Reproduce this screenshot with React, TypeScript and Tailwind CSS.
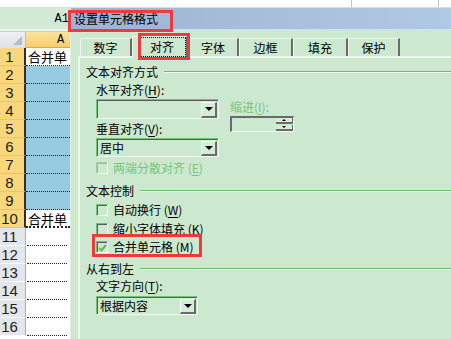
import React from "react";

function U({ c }: { c: string }) {
  return (
    <span>
      (<span className="underline underline-offset-2">{c}</span>)
    </span>
  );
}

function DropBtn({ h = "h-[16px]" }: { h?: string }) {
  return (
    <div
      className={`w-[16px] ${h} bg-[#d4edd7] border-t border-l border-t-white border-l-white border-b-2 border-r-2 border-b-[#6b6b6b] border-r-[#6b6b6b] flex items-center justify-center`}
    >
      <div className="w-0 h-0 border-l-[4px] border-r-[4px] border-t-[4px] border-l-transparent border-r-transparent border-t-black" />
    </div>
  );
}

function Dropdown({ w, h, text, bh }: { w: string; h: string; text?: string; bh?: string }) {
  return (
    <div
      className={`${w} ${h} flex border-t border-l border-b border-r border-t-[#74c07a] border-l-[#74c07a] border-b-[#f3faf3] border-r-[#f3faf3]`}
    >
      <div className="flex-1 flex items-center justify-between border-t border-l border-t-[#5c5c5c] border-l-[#5c5c5c] pl-[2px] pr-[1px]">
        <span className="text-[12px] leading-none">{text}</span>
        <DropBtn h={bh} />
      </div>
    </div>
  );
}

function CheckBox({ checked, disabled }: { checked?: boolean; disabled?: boolean }) {
  return (
    <div
      className={`w-[12px] h-[12px] flex border-t border-l border-b border-r ${
        disabled ? "border-t-[#9fcea4] border-l-[#9fcea4]" : "border-t-[#74c07a] border-l-[#74c07a]"
      } border-b-[#f3faf3] border-r-[#f3faf3]`}
    >
      <div
        className={`flex-1 border-t border-l ${
          disabled ? "border-t-[#a3b5a4] border-l-[#a3b5a4]" : "border-t-[#5c5c5c] border-l-[#5c5c5c]"
        } flex items-center justify-center`}
      >
        {checked && (
          <svg width="9" height="8" viewBox="0 0 9 8">
            <polyline points="1,4 3.5,6.5 8,1" fill="none" stroke="#5fbd66" strokeWidth="2" />
          </svg>
        )}
      </div>
    </div>
  );
}

function CheckItem({
  label,
  k,
  checked,
  disabled,
  mt,
}: {
  label: string;
  k: string;
  checked?: boolean;
  disabled?: boolean;
  mt: string;
}) {
  return (
    <div className={`flex items-center h-[12px] ${mt}`}>
      <CheckBox checked={checked} disabled={disabled} />
      <span className={`ml-[5px] whitespace-nowrap ${disabled ? "text-[#78c47e]" : ""}`}>
        {label} <U c={k} />
      </span>
    </div>
  );
}

function Heading({ text, mt }: { text: string; mt: string }) {
  return (
    <div className={`flex items-center h-[14px] ${mt}`}>
      <span className="whitespace-nowrap">{text}</span>
      <div className="flex-1 ml-[6px] h-[2px] border-t border-b border-t-[#6cba73] border-b-[#eef8ee]" />
    </div>
  );
}

function Tab({ w, text }: { w: string; text: string }) {
  return (
    <div
      className={`${w} h-[18px] flex items-center justify-center border-t border-l border-t-[#eef7ee] border-l-[#eef7ee] border-r-2 border-r-[#6b6b6b]`}
    >
      {text}
    </div>
  );
}

export default function App() {
  const rows = Array.from({ length: 16 }, (_, i) => i + 1);
  return (
    <div className="relative w-[451px] h-[339px] overflow-hidden bg-white text-black font-['Noto_Sans_CJK_SC',sans-serif] text-[12px] leading-none">
      {/* top grid strip */}
      <div className="h-[8px] flex border-b border-b-[#d6dcd6]">
        <div className="w-[351px]" />
        <div className="w-px bg-[#bfc5cc]" />
        <div className="w-[86px]" />
        <div className="w-px bg-[#bfc5cc]" />
      </div>

      <div className="flex h-[331px]">
        {/* spreadsheet */}
        <div className="w-[70px] flex flex-col shrink-0">
          <div className="h-[21px] bg-[#d3ead5] flex items-center justify-end pr-[1px] font-['Liberation_Mono',monospace] text-[12px] text-black">
            A1
          </div>
          <div className="h-[3px] bg-[#eef3ef] border-b border-b-[#c5d2c7]" />
          <div className="h-[16px] flex">
            <div className="w-[26px] bg-gradient-to-b from-[#eef1f5] to-[#dde2e8] border-r border-r-[#b8c0c8] flex items-end justify-end p-[3px]">
              <svg width="9" height="9" viewBox="0 0 9 9" className="block">
                <polygon points="9,0 9,9 0,9" fill="#b4bcc6" />
              </svg>
            </div>
            <div className="flex-1 bg-gradient-to-b from-[#fde39c] to-[#f7cd6b] border-b border-b-[#e0a940] pl-[31px] flex items-center font-['Liberation_Mono',monospace] text-[12px]">
              A
            </div>
          </div>
          {rows.map((r) => {
            const sel = r <= 10;
            const blue = r >= 2 && r <= 9;
            const merged = r === 1 || r === 10;
            return (
              <div key={r} className="h-[18px] flex shrink-0">
                <div
                  className={`w-[26px] flex items-end pb-[1px] border-b ${
                    sel
                      ? "bg-[#f9d77c] border-b-[#f2c35e] border-r-2 border-r-[#3b2b1e]"
                      : "bg-[#e3e6ea] border-b-white border-r border-r-[#a5acb4]"
                  }`}
                >
                  <span className="w-[19px] text-center font-['Liberation_Sans',sans-serif] text-[15px] leading-none text-[#222]">
                    {r}
                  </span>
                </div>
                <div
                  className={`flex-1 overflow-hidden whitespace-nowrap ${
                    blue ? "bg-[#97cbe0]" : "bg-white"
                  } ${
                    r === 10
                      ? "border-b-2 border-dotted border-b-[#222]"
                      : "border-b border-dotted border-b-[#222]"
                  } ${r > 10 ? "ml-[1px] mr-[3px]" : ""}`}
                >
                  {merged && (
                    <span className="block pl-[2px] pt-[2px] text-[13px] leading-none">合并单</span>
                  )}
                </div>
              </div>
            );
          })}
        </div>

        {/* dialog */}
        <div className="flex-1 flex flex-col border-l border-l-[#e3efe4]">
          <div className="h-[21px] bg-gradient-to-r from-[#9db2d2] to-[#b0c9e6] flex items-center pl-[3px] text-[12px]">
            设置单元格格式
          </div>
          <div className="flex-1 bg-[#cce8cf] pl-[7px] pt-[9px] flex flex-col">
            {/* tabs */}
            <div className="h-[18px] flex items-end pl-[2px]">
              <Tab w="w-[52px]" text="数字" />
              <div className="w-[56px] h-[22px] -mb-[2px] relative z-10 bg-[#cce8cf] border-t border-l border-t-[#eef7ee] border-l-[#eef7ee] border-r-2 border-r-[#6b6b6b] flex items-start pl-[5px]">
                <div className="w-[48px] h-[20px] border border-dotted border-black flex items-center justify-center">
                  对齐
                </div>
              </div>
              <Tab w="w-[51px]" text="字体" />
              <Tab w="w-[54px]" text="边框" />
              <Tab w="w-[55px]" text="填充" />
              <Tab w="w-[52px]" text="保护" />
            </div>
            <div className="h-[2px] bg-[#eef7ee]" />
            {/* panel */}
            <div className="flex-1 border-l-2 border-l-[#eef7ee] pl-[6px] flex flex-col">
              <Heading text="文本对齐方式" mt="mt-[7px]" />
              <div className="pl-[10px] flex">
                <div className="w-[123px] flex flex-col">
                  <div className="h-[14px] mt-[4px] flex items-center whitespace-nowrap">
                    水平对齐 <U c="H" />:
                  </div>
                  <div className="mt-[2px]">
                    <Dropdown w="w-[123px]" h="h-[20px]" />
                  </div>
                  <div className="h-[14px] mt-[3px] flex items-center whitespace-nowrap">
                    垂直对齐 <U c="V" />:
                  </div>
                  <div className="mt-[2px]">
                    <Dropdown w="w-[123px]" h="h-[19px]" text="居中" bh="h-[15px]" />
                  </div>
                  <CheckItem label="两端分散对齐" k="E" disabled mt="mt-[5px]" />
                </div>
                <div className="ml-[11px] flex flex-col">
                  <div className="h-[14px] mt-[21px] flex items-center whitespace-nowrap text-[#78c47e]">
                    缩进 <U c="I" />:
                  </div>
                  <div className="mt-[2px] w-[64px] h-[16px] flex border-t-2 border-l-2 border-b border-r border-t-[#6a6a6a] border-l-[#6a6a6a] border-b-[#f3faf3] border-r-[#f3faf3]">
                    <div className="flex-1" />
                    <div className="w-[17px] flex flex-col gap-[1px]">
                      <div className="h-[6px] bg-[#d4edd7] border-b-2 border-r border-b-[#6b6b6b] border-r-[#6b6b6b] flex items-center justify-center">
                        <div className="w-0 h-0 border-l-[2px] border-r-[2px] border-b-[2px] border-l-transparent border-r-transparent border-b-black" />
                      </div>
                      <div className="h-[6px] bg-[#d4edd7] border-b-2 border-r border-b-[#6b6b6b] border-r-[#6b6b6b] flex items-center justify-center">
                        <div className="w-0 h-0 border-l-[2px] border-r-[2px] border-t-[2px] border-l-transparent border-r-transparent border-t-black" />
                      </div>
                    </div>
                  </div>
                </div>
              </div>
              <Heading text="文本控制" mt="mt-[10px]" />
              <div className="pl-[10px] flex flex-col">
                <CheckItem label="自动换行" k="W" mt="mt-[6px]" />
                <CheckItem label="缩小字体填充" k="K" mt="mt-[7px]" />
                <CheckItem label="合并单元格" k="M" checked mt="mt-[6px]" />
              </div>
              <Heading text="从右到左" mt="mt-[9px]" />
              <div className="pl-[10px] flex flex-col">
                <div className="h-[14px] mt-[3px] flex items-center whitespace-nowrap">
                  文字方向 <U c="T" />:
                </div>
                <div className="mt-[3px]">
                  <Dropdown w="w-[102px]" h="h-[19px]" text="根据内容" bh="h-[15px]" />
                </div>
              </div>
            </div>
          </div>
        </div>
      </div>

      {/* red highlight boxes */}
      <div className="absolute left-[68px] top-[10px] w-[105px] h-[22px] border-[3px] border-[#ee3a3a] pointer-events-none" />
      <div className="absolute left-[138px] top-[33px] w-[52px] h-[27px] border-[3px] border-[#ee3a3a] pointer-events-none z-20" />
      <div className="absolute left-[92px] top-[234px] w-[110px] h-[23px] border-[3px] border-[#ee3a3a] pointer-events-none" />
    </div>
  );
}
